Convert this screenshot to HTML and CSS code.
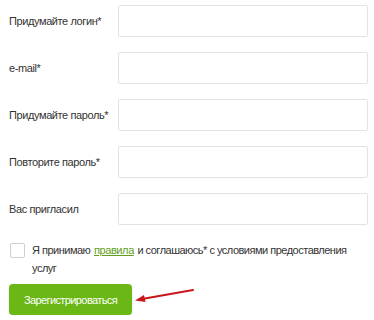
FILE: index.html
```html
<!DOCTYPE html>
<html lang="ru">
<head>
<meta charset="utf-8">
<link rel="stylesheet" href="styles.css">
</head>
<body>
<form class="form">
  <div class="row"><label class="label">Придумайте логин*</label><input class="input" type="text"></div>
  <div class="row"><label class="label">e-mail*</label><input class="input" type="text"></div>
  <div class="row"><label class="label">Придумайте пароль*</label><input class="input" type="password"></div>
  <div class="row"><label class="label">Повторите пароль*</label><input class="input" type="password"></div>
  <div class="row"><label class="label">Вас пригласил</label><input class="input" type="text"></div>
  <div class="agree">
    <span class="check"></span>
    <p class="agree-text">Я принимаю <a class="link" href="#">правила</a> и соглашаюсь* с условиями предоставления услуг</p>
  </div>
  <div class="submit-row">
    <button class="btn" type="button">Зарегистрироваться</button>
    <svg class="arrow" width="64" height="16" viewBox="0 0 64 16">
      <line x1="59" y1="2" x2="8" y2="11" stroke="#c8161d" stroke-width="2" stroke-linecap="round"/>
      <polygon points="1,12.5 10,7 11.5,14" fill="#c8161d"/>
    </svg>
  </div>
</form>
</body>
</html>
```
FILE: styles.css
```css
html, body {
  margin: 0;
  padding: 0;
  background: #ffffff;
}
body {
  font-family: "Liberation Sans", Arial, sans-serif;
  font-size: 11px;
  letter-spacing: -0.4px;
  color: #333333;
}
.form {
  padding: 5px 0 0 9px;
  display: flex;
  flex-direction: column;
}
.row {
  display: grid;
  grid-template-columns: 109px 250px;
  align-items: center;
  height: 32px;
  margin-bottom: 15px;
}
.label {
  white-space: nowrap;
}
.input {
  box-sizing: border-box;
  width: 250px;
  height: 32px;
  border: 1px solid #e3e3e3;
  border-radius: 2px;
  background: #fff;
  margin: 0;
  padding: 0 8px;
}
.agree {
  display: flex;
  align-items: flex-start;
  gap: 7px;
  margin-top: 1px;
  padding-left: 1px;
}
.check {
  flex: none;
  box-sizing: border-box;
  width: 15px;
  height: 15px;
  border: 1px solid #cfcfcf;
  border-radius: 2px;
  background: #fff;
  margin-top: 2px;
}
.agree-text {
  margin: 0;
  line-height: 18px;
  width: 320px;
  letter-spacing: -0.5px;
}
.link {
  color: #5f9e1a;
  text-decoration: underline;
  padding: 0 1px;
  letter-spacing: -0.4px;
}
.submit-row {
  display: flex;
  align-items: center;
  margin-top: 7px;
}
.btn {
  width: 123px;
  height: 31px;
  border: none;
  border-radius: 4px;
  background: #6ab715;
  color: #ffffff;
  font-family: "Liberation Sans", Arial, sans-serif;
  font-size: 11px;
  letter-spacing: -0.6px;
  padding: 0;
  box-shadow: 0 1px 2px rgba(0,0,0,0.15);
}
.arrow {
  margin-left: 2px;
  margin-top: -8px;
}
```
